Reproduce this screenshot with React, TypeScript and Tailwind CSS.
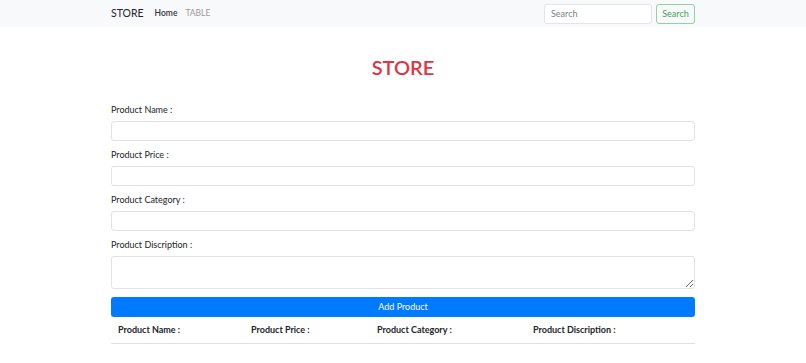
import { useState } from 'react';

const font = { fontFamily: 'Lato, "Open Sans", sans-serif' };

type Product = { name: string; price: string; category: string; description: string };

function Field({ label, children }: { label: string; children: React.ReactNode }) {
  return (
    <div className="mb-[7px]">
      <label className="mb-[4px] block text-[9px] leading-[14px] text-[#212529]">{label}</label>
      {children}
    </div>
  );
}

export default function App() {
  const [name, setName] = useState('');
  const [price, setPrice] = useState('');
  const [category, setCategory] = useState('');
  const [description, setDescription] = useState('');
  const [items, setItems] = useState<Product[]>([]);

  const input =
    'block h-[20px] w-full rounded-[3px] border border-[#dfe3e7] bg-white px-[6px] text-[9px] text-[#495057] outline-none';

  function add() {
    setItems([...items, { name, price, category, description }]);
    setName('');
    setPrice('');
    setCategory('');
    setDescription('');
  }

  return (
    <div className="min-h-screen bg-white" style={font}>
      {/* Navbar */}
      <nav className="h-[27px] bg-[#f8f9fa]">
        <div className="mx-auto flex h-full w-[584px] items-center">
          <span className="mr-[11px] text-[10.5px] text-[#212529]">STORE</span>
          <a className="mr-[8px] text-[8.5px] font-semibold text-[#333]">Home</a>
          <a className="text-[8.5px] text-[#9a9a9a]">TABLE</a>
          <div className="ml-auto flex items-center gap-[4px]">
            <input
              placeholder="Search"
              className="h-[20px] w-[108px] rounded-[3px] border border-[#e3e6e9] bg-white px-[6px] text-[9px] text-[#495057] outline-none placeholder:text-[#7a7f85]"
            />
            <button className="h-[20px] w-[39px] rounded-[3px] border border-[#8fd3a0] text-[9px] text-[#3aa758]">
              Search
            </button>
          </div>
        </div>
      </nav>

      <div className="mx-auto w-[584px]">
        <h1 className="pt-[21px] pb-[17px] text-center text-[20px] leading-[38px] font-semibold text-[#dc3545]">
          STORE
        </h1>

        <Field label="Product Name :">
          <input className={input} value={name} onChange={(e) => setName(e.target.value)} />
        </Field>
        <Field label="Product Price :">
          <input className={input} value={price} onChange={(e) => setPrice(e.target.value)} />
        </Field>
        <Field label="Product Category :">
          <input className={input} value={category} onChange={(e) => setCategory(e.target.value)} />
        </Field>
        <div className="mb-[8px]">
          <label className="mb-[4px] block text-[9px] leading-[14px] text-[#212529]">Product Discription :</label>
          <textarea
            className="block h-[33px] w-full rounded-[3px] border border-[#dfe3e7] bg-white px-[6px] text-[9px] outline-none"
            value={description}
            onChange={(e) => setDescription(e.target.value)}
          />
        </div>

        <button
          onClick={add}
          className="block h-[20px] w-full rounded-[3px] bg-[#007bff] text-[9px] text-white"
        >
          Add Product
        </button>

        <table className="w-full table-fixed border-collapse text-[9px] text-[#212529]">
          <colgroup>
            <col className="w-[133px]" />
            <col className="w-[126px]" />
            <col className="w-[156px]" />
            <col />
          </colgroup>
          <thead>
            <tr className="border-b border-[#dee2e6]">
              <th className="h-[26px] px-[7px] text-left font-bold">Product Name :</th>
              <th className="px-[7px] text-left font-bold">Product Price :</th>
              <th className="px-[7px] text-left font-bold">Product Category :</th>
              <th className="px-[7px] text-left font-bold">Product Discription :</th>
            </tr>
          </thead>
          <tbody>
            {items.map((it, i) => (
              <tr key={i} className="border-b border-[#dee2e6]">
                <td className="h-[24px] px-[7px]">{it.name}</td>
                <td className="px-[7px]">{it.price}</td>
                <td className="px-[7px]">{it.category}</td>
                <td className="px-[7px]">{it.description}</td>
              </tr>
            ))}
          </tbody>
        </table>
      </div>
    </div>
  );
}
